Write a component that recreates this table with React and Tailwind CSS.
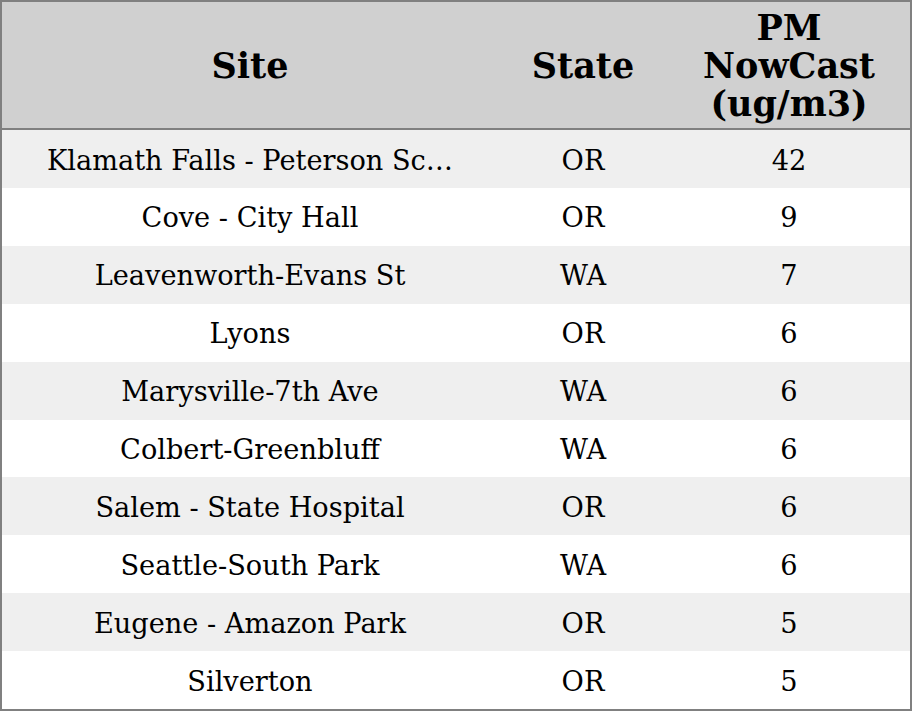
import React from "react";

const rows = [
  ["Klamath Falls - Peterson Sc…", "OR", "42"],
  ["Cove - City Hall", "OR", "9"],
  ["Leavenworth-Evans St", "WA", "7"],
  ["Lyons", "OR", "6"],
  ["Marysville-7th Ave", "WA", "6"],
  ["Colbert-Greenbluff", "WA", "6"],
  ["Salem - State Hospital", "OR", "6"],
  ["Seattle-South Park", "WA", "6"],
  ["Eugene - Amazon Park", "OR", "5"],
  ["Silverton", "OR", "5"],
];

export default function App() {
  return (
    <div
      className="w-[912px] h-[711px] border-2 border-[#808080] flex flex-col bg-white text-black overflow-hidden"
      style={{ fontFamily: '"DejaVu Serif", serif' }}
    >
      <div className="h-[128px] shrink-0 border-b-2 border-[#808080] bg-[#d0d0d0] grid grid-cols-[496px_170px_242px] items-center text-[35px] font-bold leading-[38px] text-center pt-[2px]">
        <div>Site</div>
        <div>State</div>
        <div>
          PM
          <br />
          NowCast
          <br />
          (ug/m3)
        </div>
      </div>
      <div className="flex-1 flex flex-col">
        {rows.map((r, i) => (
          <div
            key={i}
            className={
              "flex-1 grid grid-cols-[496px_170px_242px] items-center text-center text-[27.2px] pt-[4px] " +
              (i % 2 === 0 ? "bg-[#efefef]" : "bg-white")
            }
          >
            <div className="whitespace-nowrap">{r[0]}</div>
            <div>{r[1]}</div>
            <div>{r[2]}</div>
          </div>
        ))}
      </div>
    </div>
  );
}
